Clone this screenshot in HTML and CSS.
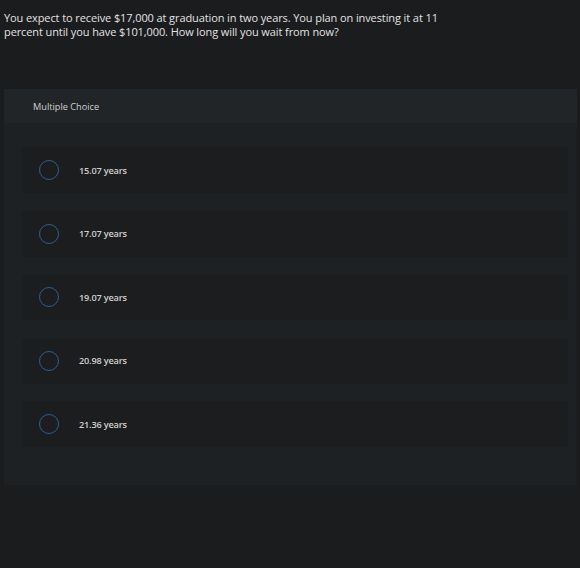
FILE: index.html
```html
<!DOCTYPE html>
<html>
<head>
<meta charset="utf-8">
<link rel="stylesheet" href="styles.css">
</head>
<body>
<div class="page">
  <p class="question">You expect to receive $17,000 at graduation in two years. You plan on investing it at 11 percent until you have $101,000. How long will you wait from now?</p>
  <div class="panel">
    <div class="panel-head">Multiple Choice</div>
    <div class="options">
      <div class="option"><span class="radio"></span><span class="label">15.07 years</span></div>
      <div class="option"><span class="radio"></span><span class="label">17.07 years</span></div>
      <div class="option"><span class="radio"></span><span class="label">19.07 years</span></div>
      <div class="option"><span class="radio"></span><span class="label">20.98 years</span></div>
      <div class="option"><span class="radio"></span><span class="label">21.36 years</span></div>
    </div>
  </div>
</div>
</body>
</html>
```
FILE: styles.css
```css
html, body {
  margin: 0;
  padding: 0;
  background: #1b1c1e;
  height: 100%;
}
body {
  font-family: "Open Sans", "Liberation Sans", sans-serif;
  color: #d6d6d6;
}
.page {
  padding: 11px 3px 0 4px;
}
.question {
  margin: 0;
  width: 445px;
  font-size: 11px;
  line-height: 13.5px;
  color: #e2e2e2;
  letter-spacing: -0.1px;
}
.panel {
  margin-top: 51px;
  background: #1e2123;
  padding-bottom: 37.5px;
}
.panel-head {
  height: 34px;
  background: #212527;
  padding-left: 29px;
  display: flex;
  align-items: center;
  font-size: 9.2px;
  color: #d0d0d0;
}
.options {
  padding: 24px 9px 0 18px;
  display: flex;
  flex-direction: column;
  gap: 17.5px;
}
.option {
  height: 46px;
  background: #1c1d1f;
  display: flex;
  align-items: center;
  padding-left: 17px;
}
.radio {
  box-sizing: border-box;
  width: 20px;
  height: 20px;
  border: 1.6px solid #2b5f92;
  border-radius: 50%;
  flex: none;
}
.label {
  margin-left: 20px;
  font-size: 9.2px;
  font-weight: 600;
  color: #cfcfcf;
  letter-spacing: -0.2px;
}
```
